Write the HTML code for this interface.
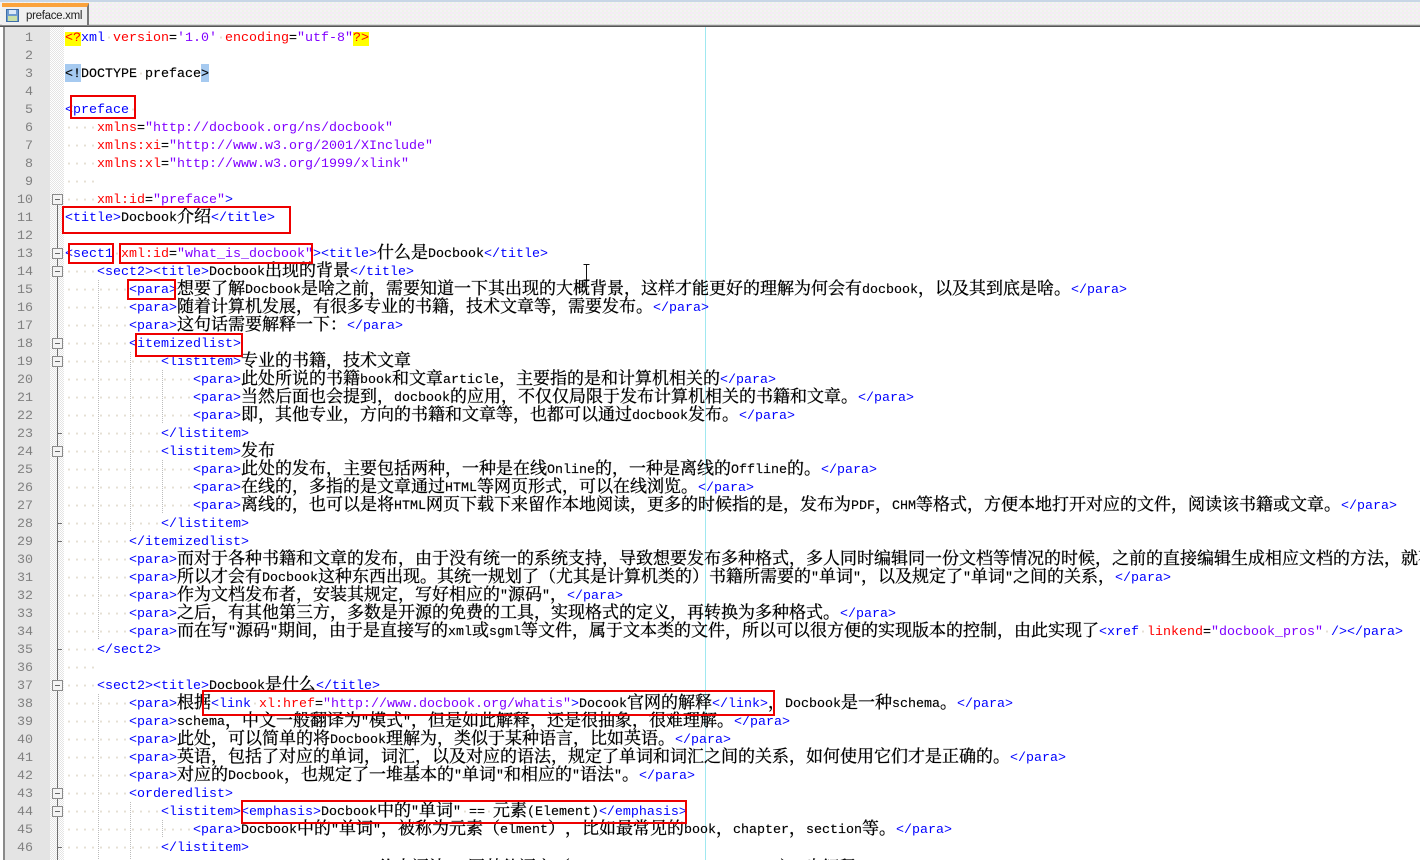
<!DOCTYPE html>
<html lang="zh">
<head>
<meta charset="utf-8">
<title>preface.xml</title>
<style>
html,body{margin:0;padding:0;width:1420px;height:860px;overflow:hidden;background:#fff}
#top{position:absolute;left:0;top:0;width:1420px;height:27px;background:#f3eff3;background-image:conic-gradient(#f8e9f8 25%,#eef3ea 0 50%,#f5f1f5 0 75%,#edf3ee 0);background-size:4px 4px;}
#top:before{content:"";position:absolute;left:0;right:0;top:0;height:2px;background:#c8d6e6}
#top:after{content:"";position:absolute;left:0;right:0;top:24px;height:3px;background:linear-gradient(#d8d8d8 0 1px,#8a8a8a 1px 2px,#555 2px)}
#tab{position:absolute;left:2px;top:3px;width:87px;height:22px;background:#f0f0f0;border-right:2px solid #777;z-index:2;border-top:4px solid #fba33c;box-sizing:border-box}
#tab span{position:absolute;left:24px;top:1px;font:11.5px/17px "Liberation Sans",sans-serif;color:#222;letter-spacing:-.3px}
#tab svg{position:absolute;left:4px;top:2px}
#lb{position:absolute;left:3px;top:27px;width:2px;height:833px;background:#8a8a8a}
#nm{position:absolute;left:5px;top:27px;width:45px;height:833px;background:#e4e4e4}
#fm{position:absolute;left:50px;top:27px;width:14px;height:833px;background:#fff;background-image:conic-gradient(#e4e4e4 25%,#fff 0 50%,#e4e4e4 0 75%,#fff 0);background-size:2px 2px}
#nums{position:absolute;left:5px;top:30px;width:28px;text-align:right;font:13.333px/18px "Liberation Mono",monospace;color:#808080}
#nums div{height:18px}
#edge{position:absolute;left:705px;top:27px;width:1px;height:833px;background:#a0e8f0}
.g{position:absolute;width:1px;background-image:repeating-linear-gradient(#bbb 0 1px,transparent 1px 2px)}
#fl{position:absolute;left:57px;top:198px;width:1px;height:662px;background:#707070}
.f{position:absolute;left:52px;width:9px;height:9px;border:1px solid #8a8a8a;background:#f4f4f4;box-sizing:content-box}
.f:after{content:"";position:absolute;left:2px;top:4px;width:5px;height:1px;background:#666}
.k{position:absolute;left:57px;width:5px;height:1px;background:#707070}
#code{position:absolute;left:65px;top:30px;font:13.333px/18px "Liberation Mono",monospace;color:#000;width:1355px;height:830px;overflow:hidden;-webkit-text-stroke:.15px;text-spacing-trim:space-all}
#code div{height:18px;white-space:pre}
i{font:normal 17px/0 "Noto Serif CJK SC","Liberation Serif",serif;-webkit-text-stroke:.3px #000;position:relative;top:1px;text-spacing-trim:space-all}
b{font-weight:normal;color:#0000ff;-webkit-text-stroke:0}
u{text-decoration:none;color:#ff0000;-webkit-text-stroke:0}
s{text-decoration:none;color:#8000ff;-webkit-text-stroke:0}
small{font-size:13.333px;color:#ded7c8;-webkit-text-stroke:0}
.y{background:linear-gradient(transparent 2px,#ffff00 2px 16px,transparent 16px);color:#ff0000;display:inline-block;height:18px;-webkit-text-stroke:0}
.c{background:linear-gradient(#a6caf0 0 16px,transparent 16px);box-shadow:0 -2px #a6caf0;display:inline-block;height:18px}
.r{position:absolute;border:2px solid #ee0000;box-sizing:border-box;z-index:5}
.x{position:absolute;top:857px;font:17px/18px "Noto Serif CJK SC",serif;-webkit-text-stroke:.3px #000;white-space:pre}
</style>
</head>
<body>
<div id="top"></div>
<div id="tab"><svg width="14" height="14" viewBox="0 0 14 14"><rect x=".5" y=".5" width="12" height="12" fill="#6d9bd0" stroke="#3f6ea8"/><rect x="3" y="1" width="7" height="4" fill="#dbe9f8"/><rect x="2" y="7" width="9" height="5" fill="#c9e0a8"/></svg><span>preface.xml</span></div>
<div id="lb"></div><div id="nm"></div><div id="fm"></div>
<div id="nums"><div>1</div><div>2</div><div>3</div><div>4</div><div>5</div><div>6</div><div>7</div><div>8</div><div>9</div><div>10</div><div>11</div><div>12</div><div>13</div><div>14</div><div>15</div><div>16</div><div>17</div><div>18</div><div>19</div><div>20</div><div>21</div><div>22</div><div>23</div><div>24</div><div>25</div><div>26</div><div>27</div><div>28</div><div>29</div><div>30</div><div>31</div><div>32</div><div>33</div><div>34</div><div>35</div><div>36</div><div>37</div><div>38</div><div>39</div><div>40</div><div>41</div><div>42</div><div>43</div><div>44</div><div>45</div><div>46</div></div>
<div id="edge"></div>
<div id="fl"></div>
<div class="f" style="top:194px"></div><div class="f" style="top:248px"></div><div class="f" style="top:266px"></div><div class="f" style="top:338px"></div><div class="f" style="top:356px"></div><div class="f" style="top:446px"></div><div class="f" style="top:680px"></div><div class="f" style="top:788px"></div><div class="f" style="top:806px"></div>
<div class="k" style="top:433px"></div><div class="k" style="top:523px"></div><div class="k" style="top:541px"></div><div class="k" style="top:649px"></div><div class="k" style="top:847px"></div>
<div class="g" style="left:98px;top:280px;height:360px"></div>
<div class="g" style="left:98px;top:694px;height:166px"></div>
<div class="g" style="left:130px;top:352px;height:180px"></div>
<div class="g" style="left:130px;top:802px;height:58px"></div>
<div class="g" style="left:162px;top:370px;height:54px"></div>
<div class="g" style="left:162px;top:460px;height:54px"></div>
<div class="g" style="left:162px;top:820px;height:18px"></div>
<div id="code"><div><span class="y">&lt;?</span><b>xml</b><small>·</small><u>version</u>=<s>'1.0'</s><small>·</small><u>encoding</u>=<s>"utf-8"</s><span class="y">?&gt;</span></div>
<div></div>
<div><span class="c">&lt;!</span>DOCTYPE<small>·</small>preface<span class="c">&gt;</span></div>
<div></div>
<div><b>&lt;preface</b><small>·</small></div>
<div><small>····</small><u>xmlns</u>=<s>"http://docbook.org/ns/docbook"</s></div>
<div><small>····</small><u>xmlns:xi</u>=<s>"http://www.w3.org/2001/XInclude"</s></div>
<div><small>····</small><u>xmlns:xl</u>=<s>"http://www.w3.org/1999/xlink"</s></div>
<div><small>····</small></div>
<div><small>····</small><u>xml:id</u>=<s>"preface"</s><b>&gt;</b></div>
<div><b>&lt;title&gt;</b>Docbook<i>介绍</i><b>&lt;/title&gt;</b></div>
<div></div>
<div><b>&lt;sect1</b><small>·</small><u>xml:id</u>=<s>"what_is_docbook"</s><b>&gt;&lt;title&gt;</b><i>什么是</i>Docbook<b>&lt;/title&gt;</b></div>
<div><small>····</small><b>&lt;sect2&gt;&lt;title&gt;</b>Docbook<i>出现的背景</i><b>&lt;/title&gt;</b></div>
<div><small>········</small><b>&lt;para&gt;</b><i>想要了解</i>Docbook<i>是啥之前，需要知道一下其出现的大概背景，这样才能更好的理解为何会有</i>docbook<i>，以及其到底是啥。</i><b>&lt;/para&gt;</b></div>
<div><small>········</small><b>&lt;para&gt;</b><i>随着计算机发展，有很多专业的书籍，技术文章等，需要发布。</i><b>&lt;/para&gt;</b></div>
<div><small>········</small><b>&lt;para&gt;</b><i>这句话需要解释一下：</i><b>&lt;/para&gt;</b></div>
<div><small>········</small><b>&lt;itemizedlist&gt;</b></div>
<div><small>············</small><b>&lt;listitem&gt;</b><i>专业的书籍，技术文章</i></div>
<div><small>················</small><b>&lt;para&gt;</b><i>此处所说的书籍</i>book<i>和文章</i>article<i>，主要指的是和计算机相关的</i><b>&lt;/para&gt;</b></div>
<div><small>················</small><b>&lt;para&gt;</b><i>当然后面也会提到，</i>docbook<i>的应用，不仅仅局限于发布计算机相关的书籍和文章。</i><b>&lt;/para&gt;</b></div>
<div><small>················</small><b>&lt;para&gt;</b><i>即，其他专业，方向的书籍和文章等，也都可以通过</i>docbook<i>发布。</i><b>&lt;/para&gt;</b></div>
<div><small>············</small><b>&lt;/listitem&gt;</b></div>
<div><small>············</small><b>&lt;listitem&gt;</b><i>发布</i></div>
<div><small>················</small><b>&lt;para&gt;</b><i>此处的发布，主要包括两种，一种是在线</i>Online<i>的，一种是离线的</i>Offline<i>的。</i><b>&lt;/para&gt;</b></div>
<div><small>················</small><b>&lt;para&gt;</b><i>在线的，多指的是文章通过</i>HTML<i>等网页形式，可以在线浏览。</i><b>&lt;/para&gt;</b></div>
<div><small>················</small><b>&lt;para&gt;</b><i>离线的，也可以是将</i>HTML<i>网页下载下来留作本地阅读，更多的时候指的是，发布为</i>PDF<i>，</i>CHM<i>等格式，方便本地打开对应的文件，阅读该书籍或文章。</i><b>&lt;/para&gt;</b></div>
<div><small>············</small><b>&lt;/listitem&gt;</b></div>
<div><small>········</small><b>&lt;/itemizedlist&gt;</b></div>
<div><small>········</small><b>&lt;para&gt;</b><i>而对于各种书籍和文章的发布，由于没有统一的系统支持，导致想要发布多种格式，多人同时编辑同一份文档等情况的时候，之前的直接编辑生成相应文档的方法，就不太合适了。</i></div>
<div><small>········</small><b>&lt;para&gt;</b><i>所以才会有</i>Docbook<i>这种东西出现。其统一规划了（尤其是计算机类的）书籍所需要的</i>"<i>单词</i>"<i>，以及规定了</i>"<i>单词</i>"<i>之间的关系，</i><b>&lt;/para&gt;</b></div>
<div><small>········</small><b>&lt;para&gt;</b><i>作为文档发布者，安装其规定，写好相应的</i>"<i>源码</i>"<i>，</i><b>&lt;/para&gt;</b></div>
<div><small>········</small><b>&lt;para&gt;</b><i>之后，有其他第三方，多数是开源的免费的工具，实现格式的定义，再转换为多种格式。</i><b>&lt;/para&gt;</b></div>
<div><small>········</small><b>&lt;para&gt;</b><i>而在写</i>"<i>源码</i>"<i>期间，由于是直接写的</i>xml<i>或</i>sgml<i>等文件，属于文本类的文件，所以可以很方便的实现版本的控制，由此实现了</i><b>&lt;xref</b><small>·</small><u>linkend</u>=<s>"docbook_pros"</s><small>·</small><b>/&gt;&lt;/para&gt;</b></div>
<div><small>····</small><b>&lt;/sect2&gt;</b></div>
<div><small>····</small></div>
<div><small>····</small><b>&lt;sect2&gt;&lt;title&gt;</b>Docbook<i>是什么</i><b>&lt;/title&gt;</b></div>
<div><small>········</small><b>&lt;para&gt;</b><i>根据</i><b>&lt;link</b><small>·</small><u>xl:href</u>=<s>"http://www.docbook.org/whatis"</s><b>&gt;</b>Docook<i>官网的解释</i><b>&lt;/link&gt;</b><i>，</i>Docbook<i>是一种</i>schema<i>。</i><b>&lt;/para&gt;</b></div>
<div><small>········</small><b>&lt;para&gt;</b>schema<i>，中文一般翻译为</i>"<i>模式</i>"<i>，但是如此解释，还是很抽象，很难理解。</i><b>&lt;/para&gt;</b></div>
<div><small>········</small><b>&lt;para&gt;</b><i>此处，可以简单的将</i>Docbook<i>理解为，类似于某种语言，比如英语。</i><b>&lt;/para&gt;</b></div>
<div><small>········</small><b>&lt;para&gt;</b><i>英语，包括了对应的单词，词汇，以及对应的语法，规定了单词和词汇之间的关系，如何使用它们才是正确的。</i><b>&lt;/para&gt;</b></div>
<div><small>········</small><b>&lt;para&gt;</b><i>对应的</i>Docbook<i>，也规定了一堆基本的</i>"<i>单词</i>"<i>和相应的</i>"<i>语法</i>"<i>。</i><b>&lt;/para&gt;</b></div>
<div><small>········</small><b>&lt;orderedlist&gt;</b></div>
<div><small>············</small><b>&lt;listitem&gt;</b><b>&lt;emphasis&gt;</b>Docbook<i>中的</i>"<i>单词</i>"<small>·</small>==<small>·</small><i>元素</i>(Element)<b>&lt;/emphasis&gt;</b></div>
<div><small>················</small><b>&lt;para&gt;</b>Docbook<i>中的</i>"<i>单词</i>"<i>，被称为元素（</i>elment<i>），比如最常见的</i>book<i>，</i>chapter<i>，</i>section<i>等。</i><b>&lt;/para&gt;</b></div>
<div><small>············</small><b>&lt;/listitem&gt;</b></div>
</div>
<div style="position:absolute;left:0;top:0;width:1420px;height:860px;overflow:hidden;pointer-events:none"><span class="x" style="left:378px">约中</span><span class="x" style="left:412px">语法</span><span class="x" style="left:468px">因其他语言（</span><span class="x" style="left:780px">）</span><span class="x" style="left:805px">也解释</span></div>
<div class="r" style="left:70px;top:95px;width:66px;height:24px"></div>
<div class="r" style="left:62px;top:206px;width:229px;height:28px"></div>
<div class="r" style="left:68px;top:243px;width:46px;height:21px"></div>
<div class="r" style="left:119px;top:243px;width:194px;height:21px"></div>
<div class="r" style="left:127px;top:279px;width:49px;height:21px"></div>
<div class="r" style="left:135px;top:333px;width:108px;height:24px"></div>
<div class="r" style="left:202px;top:690px;width:573px;height:26px"></div>
<div class="r" style="left:241px;top:800px;width:446px;height:24px"></div>
<svg style="position:absolute;left:582px;top:264px" width="9" height="17" viewBox="0 0 9 17"><path d="M1.5 .5H7.5M4.5 .5V16M1.5 16H7.5" stroke="#111" fill="none"/></svg>
</body>
</html>
